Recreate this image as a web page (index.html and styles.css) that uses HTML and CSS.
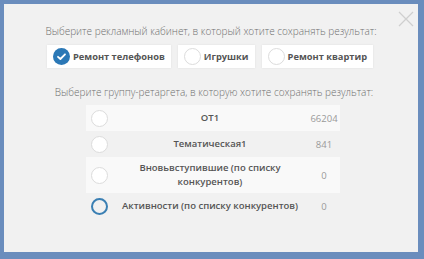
FILE: index.html
```html
<!DOCTYPE html>
<html lang="ru">
<head>
  <meta charset="UTF-8" />
  <title>Сохранение результата</title>
  <link rel="stylesheet" href="styles.css">
</head>
<body>
  <div class="modal">
    <span class="close">
      <svg width="16" height="16" viewBox="0 0 16 16"><path d="M1 1L15 15M15 1L1 15" stroke="#cfcfcf" stroke-width="1.3" fill="none"/></svg>
    </span>
    <p class="title">Выберите рекламный кабинет, в который хотите сохранять результат:</p>
    <div class="cabinets">
      <div class="cab">
        <span class="radio checked">
          <svg width="17" height="17" viewBox="0 0 17 17"><path d="M5 8.8L7.4 11L12 6.3" stroke="#fff" stroke-width="1.8" fill="none" stroke-linecap="round" stroke-linejoin="round"/></svg>
        </span>
        Ремонт телефонов
      </div>
      <div class="cab"><span class="radio"></span>Игрушки</div>
      <div class="cab"><span class="radio"></span>Ремонт квартир</div>
    </div>
    <p class="title second">Выберите группу-ретаргета, в которую хотите сохранять результат:</p>
    <div class="groups">
      <div class="row">
        <span class="cell"><span class="radio"></span></span>
        <span class="name">ОТ1</span>
        <span class="num">66204</span>
      </div>
      <div class="row">
        <span class="cell"><span class="radio"></span></span>
        <span class="name">Тематическая1</span>
        <span class="num">841</span>
      </div>
      <div class="row">
        <span class="cell"><span class="radio"></span></span>
        <span class="name">Вновьвступившие (по списку конкурентов)</span>
        <span class="num">0</span>
      </div>
      <div class="row">
        <span class="cell"><span class="radio focus"></span></span>
        <span class="name">Активности (по списку конкурентов)</span>
        <span class="num">0</span>
      </div>
    </div>
  </div>
</body>
</html>
```

FILE: styles.css
```css
body {
  margin: 0;
  padding: 4px 6px 7px 4px;
  background: #6a8dbd;
  font-family: 'Open Sans', sans-serif;
}
.modal {
  position: relative;
  height: 248px;
  background: #f1f1f1;
  padding-top: 21px;
  box-sizing: border-box;
}
.close {
  position: absolute;
  top: 6px;
  right: 4px;
  width: 16px;
  height: 16px;
}
.title {
  margin: 0;
  text-align: center;
  font-size: 10px;
  line-height: 13px;
  font-weight: 300;
  color: #6e6e6e;
}
.title.second {
  margin-top: 18px;
  padding-left: 6px;
}
.cabinets {
  display: flex;
  justify-content: center;
  gap: 7px;
  margin-top: 7px;
  padding-right: 2px;
}
.cab {
  display: flex;
  align-items: center;
  gap: 3px;
  height: 23px;
  padding: 0 6px;
  background: #fff;
  box-shadow: 0 0 2px rgba(0, 0, 0, 0.08);
  font-size: 9.3px;
  font-weight: 700;
  color: #555;
}
.radio {
  display: inline-block;
  width: 17px;
  height: 17px;
  box-sizing: border-box;
  border: 1px solid #dcdcdc;
  border-radius: 50%;
  background: #fff;
}
.radio.checked {
  border: none;
  background: #2b78b6;
}
.radio.checked svg {
  display: block;
}
.radio.focus {
  border: 2px solid #3a7fb3;
  background: transparent;
}
.groups {
  width: 254px;
  margin: 6px auto 0;
  padding-left: 4px;
}
.row {
  display: grid;
  grid-template-columns: 34px 180px 40px;
  align-items: center;
  min-height: 26px;
  padding: 4px 0;
  box-sizing: border-box;
}
.row:nth-child(odd) {
  background: #f9f9f9;
}
.row:nth-child(3) {
  min-height: 36px;
}
.cell {
  display: flex;
  padding-left: 5px;
}
.name {
  text-align: center;
  font-size: 9.5px;
  line-height: 14px;
  font-weight: 600;
  color: #555;
}
.num {
  text-align: center;
  padding-left: 8px;
  font-size: 9.5px;
  color: #9a9a9a;
}
```
